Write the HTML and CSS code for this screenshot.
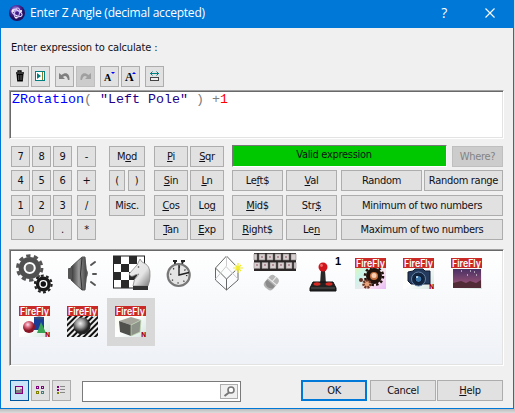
FILE: index.html
```html
<!DOCTYPE html>
<html lang="en">
<head>
<meta charset="utf-8">
<title>Enter Z Angle</title>
<link rel="stylesheet" href="styles.css">
</head>
<body>
<svg class="defs" width="0" height="0" aria-hidden="true">
  <defs>
    <linearGradient id="metal" x1="0" x2="1"><stop offset="0" stop-color="#333"/><stop offset=".5" stop-color="#999"/><stop offset="1" stop-color="#444"/></linearGradient>
    <linearGradient id="horse" x1="0" x2="1" y2="1"><stop offset="0" stop-color="#eee"/><stop offset=".6" stop-color="#e4e4e4"/><stop offset="1" stop-color="#777"/></linearGradient>
    <linearGradient id="paper" x1="0" x2="1" y2="1"><stop offset="0" stop-color="#f6fbe8"/><stop offset=".5" stop-color="#fff"/><stop offset="1" stop-color="#d3e6df"/></linearGradient>
    <linearGradient id="rainbow" x1="0" x2="1" y2="1"><stop offset="0" stop-color="#f8f58c"/><stop offset=".35" stop-color="#c8f5e8"/><stop offset=".7" stop-color="#fbe3ee"/><stop offset="1" stop-color="#e8b8f5"/></linearGradient>
    <linearGradient id="dusk" x1="0" x2="0" y2="1"><stop offset="0" stop-color="#483163"/><stop offset="1" stop-color="#a9587a"/></linearGradient>
    <radialGradient id="ball" cx=".4" cy=".35"><stop offset="0" stop-color="#eee"/><stop offset=".5" stop-color="#999"/><stop offset="1" stop-color="#222"/></radialGradient>
    <radialGradient id="pink" cx=".4" cy=".3"><stop offset="0" stop-color="#fde"/><stop offset=".5" stop-color="#d66475"/><stop offset="1" stop-color="#8a1525"/></radialGradient>
    <radialGradient id="orb" cx=".4" cy=".3"><stop offset="0" stop-color="#b9a4ee"/><stop offset=".5" stop-color="#5b37a8"/><stop offset="1" stop-color="#23105e"/></radialGradient>
    <pattern id="stripes" width="4" height="4" patternUnits="userSpaceOnUse" patternTransform="rotate(45)"><rect width="4" height="4" fill="#eee"/><rect width="2" height="4" fill="#111"/></pattern>
    <g id="banner"><rect x="8" y="8" width="31" height="10" fill="#c92a25"/><text class="ff" x="9" y="17" textLength="29" lengthAdjust="spacingAndGlyphs">FireFly</text></g>
  </defs>
</svg>
<main class="window">
  <header class="titlebar">
    <svg class="appicon" viewBox="0 0 16 16"><circle cx="8" cy="8" r="8" fill="url(#orb)"/><g fill="none" stroke="#eee4ff"><ellipse cx="8" cy="8" rx="5.5" ry="2.6" transform="rotate(28 8 8)"/><ellipse cx="8" cy="8" rx="5" ry="2.5" transform="rotate(100 8 8)" stroke="#d3bdf3"/></g><circle cx="8" cy="8" r="1.5" fill="#421b8b"/><circle cx="12" cy="6" r="1.1" fill="#fff"/><circle cx="4" cy="6" r="1" fill="#fff"/><circle cx="7" cy="12.5" r="1" fill="#fff"/></svg>
    <h1>Enter Z Angle (decimal accepted)</h1>
    <span class="q">?</span>
    <svg class="close" viewBox="0 0 10 10"><path d="M.5.5l9 9M9.5.5l-9 9" stroke="#fff" stroke-width="1.1"/></svg>
  </header>
  <section class="content">
    <p class="prompt">Enter expression to calculate :</p>
    <div class="toolbar">
      <button class="tool"><svg viewBox="0 0 17 19"><path d="M7 5V4h3v1M5 6h8" fill="none" stroke="#000" stroke-width="1.3"/><path d="M5.5 7h7l-.7 7.500H6.200z" fill="#000"/><path d="M7.500 8v5M9.200 8v5M10.800 8v5" stroke="#999" stroke-width=".5"/></svg></button>
      <button class="tool"><svg viewBox="0 0 17 19"><rect x="3.500" y="4.500" width="9" height="9" fill="#fff" stroke="#008080"/><path d="M5 6l4 3-4 3z" fill="#008080"/><path d="M10.500 5v8" stroke="#80802a"/></svg></button>
      <button class="tool gap"><svg viewBox="0 0 17 19"><path d="M3 6v6h6L7 10c2-2 4-1 5 3h1.500C14 7 10 4 5.500 8z" fill="#808080"/></svg></button>
      <button class="tool off"><svg viewBox="0 0 17 19"><path d="M14 6v6H8l2-2C8 8 6 9 5 13H3.500C3 7 7 4 11.500 8z" fill="#a0a0a0"/></svg></button>
      <button class="tool gap"><svg viewBox="0 0 17 19"><text class="serif" x="3" y="14" font-size="10">A</text><path d="M10 5h4l-2 2z" fill="#00f"/></svg></button>
      <button class="tool"><svg viewBox="0 0 17 19"><text class="serif" x="3" y="14" font-size="12">A</text><path d="M10 7h4l-2-2z" fill="#00f"/></svg></button>
      <button class="tool gap"><svg viewBox="0 0 17 19"><path d="M4 6.500h9M6.500 4.500l-2 2 2 2M10.500 4.500l2 2-2 2" fill="none" stroke="#008080"/><rect x="4.500" y="10.500" width="8" height="3" fill="#eee" stroke="#444"/></svg></button>
    </div>
    <div class="editor sunken"><code><span class="fn">ZRotation</span>( <span class="str">"Left Pole"</span> ) +<span class="num">1</span></code></div>
    <div class="pad">
      <div class="digits">
        <button>7</button><button>8</button><button>9</button>
        <button>4</button><button>5</button><button>6</button>
        <button>1</button><button>2</button><button>3</button>
        <button class="wide">0</button><button>.</button>
      </div>
      <div class="ops"><button>-</button><button>+</button><button>/</button><button>*</button></div>
      <div class="misc"><button class="wide">M<u>o</u>d</button><button>(</button><button>)</button><button class="wide">Misc.</button></div>
      <div class="trig">
        <button><u>P</u>i</button><button><u>S</u>qr</button><button><u>S</u>in</button><button><u>L</u>n</button>
        <button><u>C</u>os</button><button>Lo<u>g</u></button><button><u>T</u>an</button><button><u>E</u>xp</button>
      </div>
      <div class="right">
        <div class="status"><output>Valid expression</output><button class="off">Where?</button></div>
        <div class="lower">
          <div class="strings">
            <button>Le<u>f</u>t$</button><button><u>V</u>al</button>
            <button><u>M</u>id$</button><button>Str<u>$</u></button>
            <button><u>R</u>ight$</button><button>Le<u>n</u></button>
          </div>
          <div class="numbers"><button>Random</button><button>Random range</button><button class="wide">Minimum of two numbers</button><button class="wide">Maximum of two numbers</button></div>
        </div>
      </div>
    </div>
    <div class="objects sunken">
      <div class="cell"><svg viewBox="0 0 48 48"><g fill="none"><circle cx="18.700" cy="18" r="8.600" stroke="#505050" stroke-width="5"/><circle cx="18.700" cy="18" r="12.200" stroke="#555" stroke-width="3" stroke-dasharray="4.300 3.360"/><circle cx="18.700" cy="18" r="4" fill="#666"/><circle cx="32.300" cy="34" r="5.800" stroke="#1a1a1a" stroke-width="3.400"/><circle cx="32.300" cy="34" r="8.300" stroke="#222" stroke-width="2.200" stroke-dasharray="2.800 2.410"/><circle cx="32.300" cy="34" r="2.700" fill="#111"/></g></svg></div>
      <div class="cell"><svg viewBox="0 0 48 48"><path d="M12 17L23 7h3q3 17 0 33h-3L12 30z" fill="url(#metal)" stroke="#555"/><rect x="9" y="18" width="4" height="11" rx="1" fill="#555"/><path d="M23 8q-3 16 0 32" fill="none" stroke="#333"/><path d="M27 19q4 4 0 9" fill="#555"/><path d="M32 15l4-3M34 24h3M32 32l4 3" stroke="#555" stroke-width="2" stroke-linecap="round"/></svg></div>
      <div class="cell"><svg viewBox="0 0 48 48"><rect x="6.500" y="6" width="31" height="32" fill="#fff" stroke="#222"/><path d="M6 6h8v8H6zM22 6h8v8h-8zM14 14h8v8h-8zM30 14h8v8h-8zM6 22h8v8H6zM22 22h8v8h-8zM14 30h8v8h-8zM30 30h8v8h-8z" fill="#292929"/><path d="M26 36q0-7 6-12l-4 1q-4 3-6-1l8-9 3-6 2 3q9 3 8 14 0 5-2 10z" fill="url(#horse)" stroke="#888" stroke-width=".8"/><path d="M26 36h15v4H26z" fill="#333"/><circle cx="31.500" cy="17" r=".8" fill="#444"/></svg></div>
      <div class="cell"><svg viewBox="0 0 48 48"><path d="M18 11h4M26 11h4M20 11v3M28 11l-1 3" stroke="#222" stroke-width="2"/><circle cx="23.700" cy="25" r="11" fill="#e4e4e4" stroke="#777" stroke-width="2.200"/><circle cx="23.700" cy="25" r="8" fill="none" stroke="#333" stroke-width="1.400" stroke-dasharray="1.200 5.080"/><path d="M24 15v10l10-2.500" fill="none" stroke="#222" stroke-width="1.400"/></svg></div>
      <div class="cell"><svg viewBox="0 0 48 48"><g fill="none" stroke="#666"><path d="M23.500 6L35 18v12L23.500 40 12.500 30V18z"/><path d="M12.500 18L23.500 29 35 18M23.500 29v11"/><path d="M23.500 6v10L12.500 29M23.500 17L35 29" stroke="#ccc"/></g><path d="M30 18h10M35 13v10M32 15l6 6M38 15l-6 6" stroke="#f1eb2b" stroke-width="1.200"/></svg></div>
      <div class="cell"><svg viewBox="0 0 48 48"><rect x="3" y="3" width="42" height="18" fill="#2b2727"/><g fill="#d8d0d0" stroke="#8a8484" stroke-width=".6"><path d="M3 4h3v6H3zM8 4h6v6H8zM16 4h6v6h-6zM24 4h6v6h-6zM32 4h6v6h-6zM40 4h5v6h-5zM3 12.500h6v6H3zM11 12.500h6v6h-6zM19 12.500h6v6h-6zM27 12.500h6v6h-6zM35 12.500h6v6h-6zM43 12.500h2v6h-2z"/></g><path d="M10 7h2M18 7h2M26 7h2M34 7h2M5 15h2M13 15h2M21 15h2M29 15h2M37 15h2" stroke="#8c5560"/><g transform="rotate(40 20 33)"><rect x="14.500" y="25" width="11" height="15" rx="4" fill="#b4b4b4"/><path d="M14 31h12M20 25v6" stroke="#eee"/><path d="M15 33h10v3q-5 5-10 0z" fill="#8b8b8b"/></g></svg></div>
      <div class="cell"><svg viewBox="0 0 48 48"><path d="M22 20h4l1 14h-6z" fill="#292929"/><path d="M14 32h20l3 6v3H11v-3z" fill="#222" stroke="#111" stroke-linejoin="round"/><path d="M12 38h24" stroke="#555"/><circle cx="24" cy="17" r="4.500" fill="#cf161c"/><circle cx="22.500" cy="15.500" r="1.400" fill="#f36a6a"/><ellipse cx="18" cy="34" rx="3.500" ry="1.700" fill="#d52a24"/><ellipse cx="30" cy="34" rx="3.500" ry="1.700" fill="#d52a24"/><text class="one" x="36" y="15">1</text></svg></div>
      <div class="cell"><svg viewBox="0 0 48 48"><rect x="8" y="8" width="31" height="31" fill="url(#rainbow)"/><circle cx="27" cy="26" r="6" fill="#c87140" stroke="#21120c" stroke-width="4"/><circle cx="27" cy="26" r="9" fill="none" stroke="#21120c" stroke-width="2.500" stroke-dasharray="2.500 2.210"/><circle cx="27" cy="25.500" r="2.500" fill="#f9ceb0"/><circle cx="20" cy="34" r="3.500" fill="#e5a17a" stroke="#693525" stroke-width="2.500" stroke-dasharray="2 1"/><circle cx="14" cy="30" r="2" fill="#632f22"/><use href="#banner"/></svg></div>
      <div class="cell"><svg viewBox="0 0 48 48"><rect x="8" y="8" width="31" height="31" fill="url(#paper)"/><path d="M13 22l5-1 2-2h8l2 2h5v13H16l-3-3z" fill="#253b5d" stroke="#101b33"/><circle cx="23.500" cy="29" r="7" fill="#13253f" stroke="#6382a7"/><circle cx="23.500" cy="29" r="3.500" fill="#3c75a8" stroke="#051327"/><circle cx="22" cy="27" r="1" fill="#d6efff"/><use href="#banner"/><text class="n" x="34" y="39">N</text></svg></div>
      <div class="cell"><svg viewBox="0 0 48 48"><rect x="8" y="8" width="31" height="31" fill="url(#paper)"/><rect x="10" y="19" width="28" height="19" fill="url(#dusk)"/><path d="M10 33l8-2 5 2 4-2 6 2 5-3v8H10z" fill="#512c36"/><path d="M18 21h1M27 21h1M31 22h1M24 25h1M33 25h1" stroke="#fff"/><use href="#banner"/></svg></div>
      <div class="cell"><svg viewBox="0 0 48 48"><rect x="8" y="8" width="31" height="31" fill="url(#paper)"/><path d="M23 19h10v13H23z" fill="#173d98"/><ellipse cx="28" cy="20" rx="5" ry="1.500" fill="#304b78"/><path d="M30 24l5 11h-9z" fill="#36a454"/><circle cx="18" cy="29" r="6" fill="url(#pink)"/><use href="#banner"/><text class="n" x="34" y="39">N</text></svg></div>
      <div class="cell"><svg viewBox="0 0 48 48"><rect x="8" y="8" width="31" height="31" fill="url(#stripes)"/><circle cx="23" cy="28" r="8.500" fill="url(#ball)"/><use href="#banner"/></svg></div>
      <div class="cell selected"><svg viewBox="0 0 48 48"><rect x="8" y="8" width="31" height="31" fill="url(#paper)"/><path d="M12 23l12-4 10 3-10 5z" fill="#a4a49b"/><path d="M12 23l12 4v11l-11-4z" fill="#50504d"/><path d="M24 27l10-5-1 12-9 4z" fill="#8e938a" stroke="#bed8b0" stroke-width=".7"/><use href="#banner"/><text class="n" x="34" y="39">N</text></svg></div>
    </div>
    <footer class="bottom">
      <button class="tool active"><svg viewBox="0 0 17 19"><rect x="4.500" y="5.500" width="7" height="7" fill="#808080" stroke="#800080"/><path d="M5 6h6v2H9v1H5z" fill="#ddd"/></svg></button>
      <button class="tool"><svg viewBox="0 0 17 19"><g fill="#ddd"><rect x="4.500" y="5.500" width="2" height="2" stroke="#800080"/><rect x="9.500" y="5.500" width="2" height="2" stroke="#800080"/><rect x="4.500" y="10.500" width="2" height="2" stroke="#808000"/><rect x="9.500" y="10.500" width="2" height="2" stroke="#408080"/></g></svg></button>
      <button class="tool"><svg viewBox="0 0 17 19"><path d="M4 5h2v2H4zM4 8h2v2H4z" fill="#800080"/><path d="M4 11h2v2H4z" fill="#808000"/><path d="M7 5.500h5M7 8.500h5M7 11.500h5" stroke="#888"/></svg></button>
      <div class="search"><button aria-label="Search"><svg viewBox="0 0 16 13"><circle cx="10" cy="5" r="3" fill="#fff" stroke="#777" stroke-width="1.600"/><path d="M8 7.500L3.500 11" stroke="#777" stroke-width="2"/></svg></button></div>
      <button class="dlg ok">OK</button><button class="dlg cancel">Cancel</button><button class="dlg"><u>H</u>elp</button>
    </footer>
  </section>
</main>
</body>
</html>
```
FILE: styles.css
```css
* { box-sizing: border-box; }
body { margin: 0; width: 515px; height: 413px; overflow: hidden; background: linear-gradient(#d2d2d2 409px, #bcbcbc 409px, #dcdcdc); font: 11px/15px "DejaVu Sans Condensed", "Noto Sans", sans-serif; color: #101018; letter-spacing: -.3px; }
.defs { display: block; }
.window { width: 514px; height: 409px; background: #f0f0f0; border: 1px solid #0078d7; border-top: 0; }
.titlebar { height: 28px; background: #0078d7; color: #fff; display: flex; align-items: center; padding: 0 17px 3px 8px; }
.appicon { width: 16px; height: 16px; }
h1 { margin: 0 0 0 5px; font: 12px/20px "Open Sans", sans-serif; letter-spacing: -.22px; flex: 1; white-space: nowrap; }
.q { font: 14px/20px "Open Sans", sans-serif; margin-right: 38px; }
.close { width: 10px; height: 10px; margin-right: 1px; }
.content { padding: 12px 9px 0 8px; }
.prompt { margin: 0 0 11px 2px; height: 15px; letter-spacing: -.13px; }
.toolbar { display: flex; gap: 2px; padding-left: 1px; }
button { display: block; height: 21px; padding: 0; border: 1px solid #adadad; background: #e1e1e1; color: inherit; font: inherit; letter-spacing: inherit; line-height: 19px; white-space: nowrap; text-align: center; }
u { text-underline-offset: 1px; text-decoration-thickness: 1px; }
.tool { width: 19px; }
.tool svg { display: block; width: 17px; height: 19px; }
.tool.gap { margin-left: 3px; }
.off { background: #ccc; border-color: #bfbfbf; color: #838383; }
.serif { font-family: "Liberation Serif", serif; font-weight: 700; letter-spacing: 0; }
.sunken { border: 1px solid; border-color: #a0a0a0 #fff #fff #a0a0a0; box-shadow: inset 1px 1px #696969, inset -1px -1px #e3e3e3; }
.editor { height: 49px; width: 495px; margin-top: 3px; background-color: #fff; padding: 1px 1px 1px 2px; }
code { display: block; font: 13.33px/16px "Liberation Mono", monospace; letter-spacing: 0; white-space: pre; color: #808080; }
.fn { color: #00f; }
.str { color: #208; }
.num { color: #f00; }
.pad { display: flex; margin: 7px 0 0 2px; height: 94px; }
.digits, .ops, .misc, .trig, .strings, .numbers { display: grid; grid-auto-rows: 21px; row-gap: 3.33px; align-content: start; }
.digits { grid-template-columns: repeat(3, 19px); column-gap: 2px; }
.wide { grid-column: span 2; }
.ops { width: 19px; margin-left: 5px; }
.misc { grid-template-columns: 16px 17px; column-gap: 3px; margin-left: 13px; }
.trig { grid-template-columns: 34px 34px; column-gap: 2px; margin-left: 9px; }
.right { margin-left: 8px; width: 271px; }
.status { display: flex; justify-content: space-between; align-items: flex-end; height: 22px; margin: -1px 0 3.33px; }
output { width: 215px; height: 22px; background: #00c800; border: 1px solid; border-color: #777 #fff #fff #777; line-height: 18px; text-align: center; padding-right: 11px; }
.status button { width: 51px; }
.lower { display: flex; justify-content: space-between; }
.strings { grid-template-columns: 51px 51px; column-gap: 3px; }
.numbers { grid-template-columns: 81px 79px; column-gap: 2px; }
.objects { margin-top: 9px; width: 495px; height: 117px; padding: 1px; background: linear-gradient(#fff, #eef1f6); display: grid; grid-template-columns: repeat(10, 48px); grid-auto-rows: 48px; align-content: start; }
.cell { margin-top: -1px; height: 48px; }
.cell svg { display: block; width: 48px; height: 48px; }
.selected { background: #d8d8d8; }
.ff { font: 600 10px Inter, sans-serif; fill: #fff; letter-spacing: 0; }
.n { font: bold 7px "DejaVu Sans Condensed", sans-serif; fill: #a4000d; letter-spacing: 0; }
.one { font: bold 11px "Liberation Sans", sans-serif; letter-spacing: 0; }
.bottom { display: flex; gap: 2px; margin-top: 14px; padding-left: 1px; }
.active { border-color: #00549b; background: #cce4f7; }
.search { width: 159px; height: 21px; margin: 1px 0 0 9px; background: #fff; border: 1px solid #7a7a7a; display: flex; justify-content: flex-end; align-items: center; padding-right: 2px; }
.search button { width: 18px; height: 15px; background: #f0f0f0; }
.search svg { display: block; width: 16px; height: 13px; }
.dlg { width: 66px; }
.ok { border: 2px solid #0078d7; margin-left: 58px; line-height: 17px; }
.cancel { margin: 0 -1px 0 1px; }
```
